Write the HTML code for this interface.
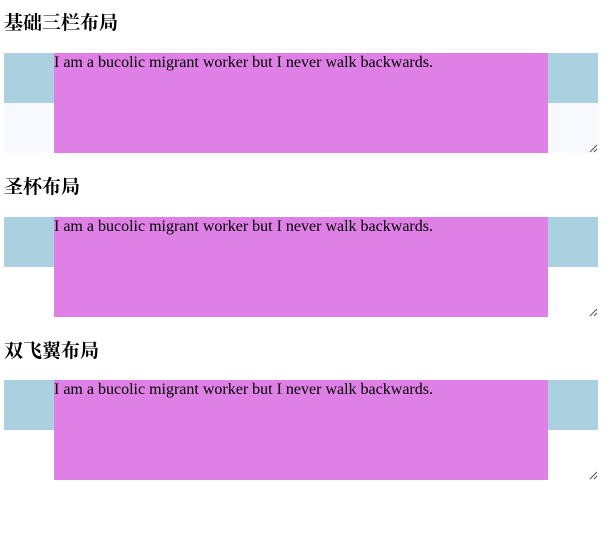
<!DOCTYPE html>
<html><head><meta charset="utf-8"><style>
body{margin:0;width:612px;height:538px;background:#fff;position:relative;font-family:"Liberation Serif","Noto Serif CJK SC",serif;overflow:hidden}
.h{position:absolute;left:4px;font-size:19px;line-height:22px;font-family:"Liberation Serif","Noto Serif CJK SC",serif;font-weight:bold;color:#000}
.b{position:absolute;background:#abd0e0;height:50px}
.p{position:absolute;left:54px;width:494px;height:100px;background:#de80e5;font-size:16px;line-height:19px;color:#000;white-space:nowrap}
.g{position:absolute;left:4px;width:594px;height:50px;background:#f8f8ff}
svg{position:absolute}
</style></head><body>
<div class="h" style="top:13px">基础三栏布局</div>
<div class="g" style="top:103px"></div>
<div class="b" style="top:53px;left:4px;width:50px"></div>
<div class="b" style="top:53px;left:548px;width:50px"></div>
<div class="p" style="top:53px">I am a bucolic migrant worker but I never walk backwards.</div>
<svg style="left:589px;top:144px" width="9" height="9"><path d="M1 8L8 1M5 8L8 5" stroke="#555" stroke-width="1"/></svg>

<div class="h" style="top:177px">圣杯布局</div>
<div class="b" style="top:217px;left:4px;width:50px"></div>
<div class="b" style="top:217px;left:548px;width:50px"></div>
<div class="p" style="top:217px">I am a bucolic migrant worker but I never walk backwards.</div>
<svg style="left:589px;top:308px" width="9" height="9"><path d="M1 8L8 1M5 8L8 5" stroke="#555" stroke-width="1"/></svg>

<div class="h" style="top:341px">双飞翼布局</div>
<div class="b" style="top:380px;left:4px;width:50px"></div>
<div class="b" style="top:380px;left:548px;width:50px"></div>
<div class="p" style="top:380px">I am a bucolic migrant worker but I never walk backwards.</div>
<svg style="left:589px;top:471px" width="9" height="9"><path d="M1 8L8 1M5 8L8 5" stroke="#555" stroke-width="1"/></svg>
</body></html>
